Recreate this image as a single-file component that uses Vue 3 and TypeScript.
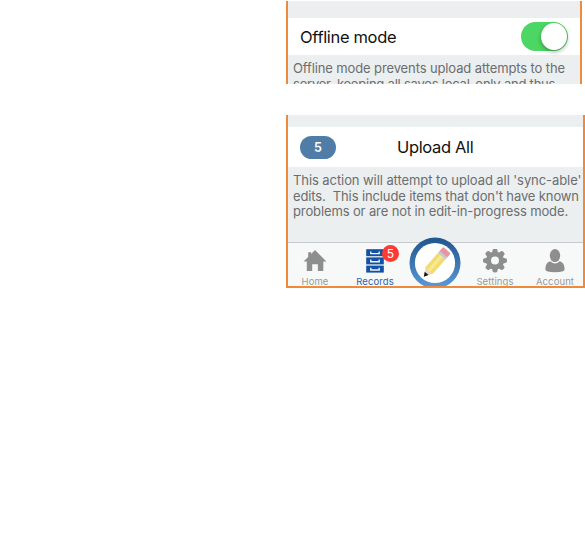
<script setup lang="ts">
import { ref } from 'vue'

const offline = ref<boolean>(true)
const pending: number = 5
const gearTeeth: number[] = [0, 45, 90, 135, 180, 225, 270, 315]
</script>

<template>
  <main class="page">
    <section class="panel offline-panel">
      <div class="row offline-row">
        <span class="title">Offline mode</span>
        <button class="switch" :class="{ on: offline }" role="switch" :aria-checked="offline" @click="offline = !offline">
          <span class="knob"></span>
        </button>
      </div>
      <div class="note">
        <div class="l1">Offline mode prevents upload attempts to the</div>
        <div class="l2">server, keeping all saves local-only and thus</div>
      </div>
    </section>

    <section class="panel upload-panel">
      <div class="row upload-row">
        <span class="count">{{ pending }}</span>
        <span class="title upload-title">Upload All</span>
      </div>
      <div class="note upload-note">
        <div class="l3">This action will attempt to upload all 'sync-able'</div>
        <div class="l4">edits.&nbsp; This include items that don't have known</div>
        <div class="l5">problems or are not in edit-in-progress mode.</div>
      </div>
      <nav class="tabs">
        <a class="tab">
          <svg width="26" height="24" viewBox="0 0 26 24">
            <path fill="#8e8e8e" d="M13 1 24.5 12.6H21.3V22H15.9V15.3H10.2V22H4.8V12.6H1.5L6.2 7.9V3.3H9.1V5Z" />
          </svg>
          <span class="label">Home</span>
        </a>
        <a class="tab active">
          <svg width="26" height="24" viewBox="0 0 26 24">
            <g fill="#1450a3">
              <rect x="4.2" y="0.2" width="17.6" height="7" />
              <rect x="4.2" y="8.4" width="17.6" height="7" />
              <rect x="4.2" y="16.6" width="17.6" height="7" />
            </g>
            <path fill="none" stroke="#f0f5fa" stroke-width="1.4" d="M8.8 2.4V4.6H17.2V2.4M8.8 10.6V12.8H17.2V10.6M8.8 18.8V21H17.2V18.8" />
          </svg>
          <span class="label">Records</span>
          <span class="badge">{{ pending }}</span>
        </a>
        <a class="tab">
          <svg class="compose" width="52" height="50" viewBox="0 0 52 50">
            <defs>
              <linearGradient id="ring" x1="0" y1="0" x2="0" y2="1">
                <stop offset="0" stop-color="#20568e" />
                <stop offset="0.5" stop-color="#3d75b0" />
                <stop offset="1" stop-color="#5c9bdb" />
              </linearGradient>
            </defs>
            <circle cx="26" cy="26" r="25.5" fill="url(#ring)" />
            <circle cx="26" cy="26" r="20.1" fill="#fff" />
            <g transform="translate(15 39.5) rotate(-49)">
              <path fill="#ead9bd" d="M0 0 8-5V5Z" />
              <path fill="#151515" d="M-.3 0 4-2.5V2.5Z" />
              <path fill="#f1dc70" d="M7.5-5H27V5H7.5Z" />
              <path fill="#f8e890" d="M7.5-1.8H27V1.4H7.5Z" />
              <rect x="27" y="-5" width="2.5" height="10" fill="#bfc9ca" />
              <path fill="#e695a3" d="M29.5-5H33.5Q35-5 35-3.5V3.5Q35 5 33.5 5H29.5Z" />
            </g>
          </svg>
        </a>
        <a class="tab">
          <svg width="26" height="24" viewBox="0 0 26 24">
            <g fill="#8e8e8e" transform="translate(13 11.6)">
              <path v-for="a in gearTeeth" :key="a" :transform="`rotate(${a})`" d="M-3.2-7-2.2-11.2Q-2-12 0-12T2.2-11.2L3.2-7Z" />
            </g>
            <circle cx="13" cy="11.6" r="6.5" fill="none" stroke="#8e8e8e" stroke-width="5" />
          </svg>
          <span class="label">Settings</span>
        </a>
        <a class="tab">
          <svg width="26" height="24" viewBox="0 0 26 24">
            <g fill="#8e8e8e">
              <ellipse cx="13" cy="6.6" rx="5.2" ry="6.5" />
              <path d="M8.3 12.3Q13 16.8 17.7 12.3C21 13.3 22.6 15.6 22.6 20.6Q22.6 23.2 13 23.2T3.4 20.6C3.4 15.6 5 13.3 8.3 12.3Z" />
            </g>
          </svg>
          <span class="label">Account</span>
        </a>
      </nav>
    </section>
  </main>
</template>

<style>
body {
  margin: 0;
  background: #fff;
}
</style>

<style scoped>
.page {
  box-sizing: border-box;
  width: 585px;
  height: 539px;
  padding: 1px 0 0 286px;
  overflow: hidden;
  font-family: Inter, 'Liberation Sans', sans-serif;
}
.panel {
  box-sizing: border-box;
  background: #ebeff0;
  border: solid #ee8a3a;
  overflow: hidden;
}
.offline-panel {
  width: 296px;
  height: 83px;
  border-width: 0 2px;
  padding-top: 17px;
}
.upload-panel {
  width: 299px;
  height: 173px;
  margin-top: 31px;
  border-width: 0 2px 2px;
  padding-top: 12px;
}
.row {
  box-sizing: border-box;
  display: flex;
  align-items: center;
  background: #fff;
}
.offline-row {
  height: 37px;
  justify-content: space-between;
  padding: 0 12px;
}
.title {
  font-size: 16.5px;
  line-height: 20px;
  letter-spacing: -0.34px;
  color: #111;
  white-space: nowrap;
}
.switch {
  box-sizing: border-box;
  width: 47px;
  height: 29px;
  padding: 1px;
  border: 0;
  border-radius: 15px;
  background: #ddd;
  display: flex;
}
.switch.on {
  background: #4cd663;
  justify-content: flex-end;
}
.knob {
  width: 26px;
  height: 27px;
  border-radius: 50%;
  background: #fff;
  box-shadow: 0 2px 4px rgba(0, 0, 0, 0.3);
}
.note {
  padding: 6px 0 0 5px;
  font-size: 13px;
  line-height: 15.5px;
  color: #6b6d6f;
  white-space: nowrap;
}
.l1 {
  letter-spacing: -0.12px;
}
.l2 {
  letter-spacing: -0.22px;
}
.l3 {
  letter-spacing: -0.08px;
}
.l4 {
  letter-spacing: -0.12px;
}
.l5 {
  letter-spacing: -0.12px;
}
.upload-row {
  height: 40px;
  padding-left: 12px;
}
.count {
  width: 36px;
  height: 23px;
  border-radius: 12px;
  background: #507da8;
  color: #fff;
  font-size: 12.5px;
  font-weight: 600;
  line-height: 24px;
  text-align: center;
}
.upload-title {
  margin-left: 61px;
}
.upload-note {
  box-sizing: border-box;
  height: 75px;
}
.tabs {
  box-sizing: border-box;
  height: 44px;
  display: grid;
  grid-template-columns: repeat(5, 60px);
  margin-left: -3px;
  border-top: 1px solid #c8cbcd;
  background: #f7f9f9;
}
.tab {
  position: relative;
  display: flex;
  flex-direction: column;
  align-items: center;
  padding-top: 6px;
  color: #97999b;
}
.tab svg {
  display: block;
  flex: none;
}
.tab .compose {
  position: absolute;
  left: 4px;
  top: -6px;
}
.label {
  margin-top: 3px;
  font-size: 9.5px;
  line-height: 12px;
  letter-spacing: 0.1px;
}
.active {
  color: #2c62ae;
}
.badge {
  position: absolute;
  left: 37px;
  top: 2px;
  width: 17px;
  height: 17px;
  border-radius: 50%;
  background: #fb3b35;
  color: #fff;
  font-size: 12px;
  line-height: 17px;
  text-align: center;
}
</style>
